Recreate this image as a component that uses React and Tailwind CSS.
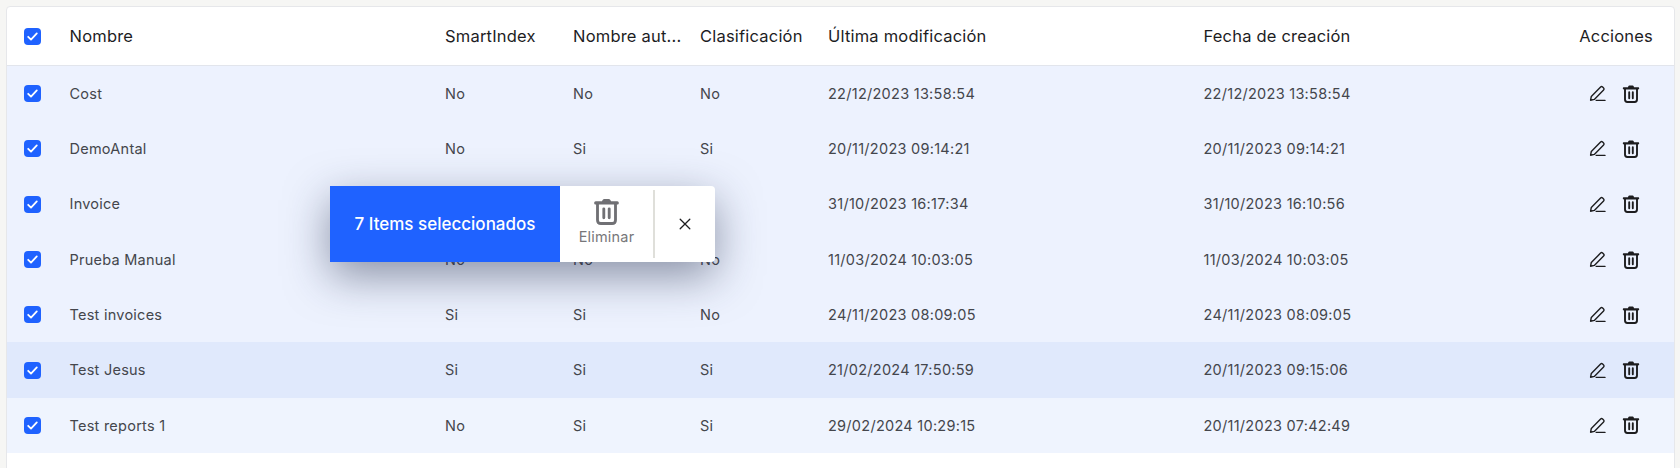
const rows = [
  { name: "Cost", smart: "No", auto: "No", clas: "No", mod: "22/12/2023 13:58:54", created: "22/12/2023 13:58:54" },
  { name: "DemoAntal", smart: "No", auto: "Si", clas: "Si", mod: "20/11/2023 09:14:21", created: "20/11/2023 09:14:21" },
  { name: "Invoice", smart: "No", auto: "No", clas: "Si", mod: "31/10/2023 16:17:34", created: "31/10/2023 16:10:56" },
  { name: "Prueba Manual", smart: "No", auto: "No", clas: "No", mod: "11/03/2024 10:03:05", created: "11/03/2024 10:03:05" },
  { name: "Test invoices", smart: "Si", auto: "Si", clas: "No", mod: "24/11/2023 08:09:05", created: "24/11/2023 08:09:05" },
  { name: "Test Jesus", smart: "Si", auto: "Si", clas: "Si", mod: "21/02/2024 17:50:59", created: "20/11/2023 09:15:06", hover: true },
  { name: "Test reports 1", smart: "No", auto: "Si", clas: "Si", mod: "29/02/2024 10:29:15", created: "20/11/2023 07:42:49" },
];

const gridCols = "grid grid-cols-[62.5px_375.5px_128px_127px_128px_375.5px_240px_1fr] items-center";

const Checkbox = () => (
  <span className="ml-[17px] flex h-[17px] w-[17px] items-center justify-center rounded-[4px] bg-[#1f62ff]">
    <svg width="13" height="13" viewBox="0 0 13 13" fill="none" stroke="#fff" strokeWidth="1.8" strokeLinecap="round" strokeLinejoin="round">
      <path d="M2.2 6.8 5 9.6 10.8 3.4" />
    </svg>
  </span>
);

const PenIcon = () => (
  <svg width="17" height="17" viewBox="0 0 17 17" fill="none" stroke="#1d1d1f" strokeWidth="1.4" strokeLinecap="round" strokeLinejoin="round">
    <path d="M1.6 15.2 2.3 11.4 11.6 2.1C12.2 1.5 13 1.5 13.6 2.1L14.6 3.1C15.2 3.7 15.2 4.5 14.6 5.1L5.3 14.4Z" />
    <path d="M7.2 15.4H16" />
  </svg>
);

const TrashIcon = ({ size = 18, color = "#1d1d1f" }) => (
  <svg width={size} height={size} viewBox="0 0 18 18" fill="none">
    <path d="M6 2.2C6.3 1 7 .6 8 .6h2c1 0 1.7.4 2 1.6h4.2c.6 0 1 .5 1 1.1s-.4 1.1-1 1.1H1.8c-.6 0-1-.5-1-1.1s.4-1.1 1-1.1Z" fill={color} />
    <path d="M3 4v10.6C3 16 3.9 17 5.3 17h7.4c1.4 0 2.3-1 2.3-2.4V4" stroke={color} strokeWidth="1.9" />
    <path d="M7.2 7.2v6M10.8 7.2v6" stroke={color} strokeWidth="1.9" strokeLinecap="round" />
  </svg>
);

export default function App() {
  return (
    <div className="relative h-[468px] w-[1680px] overflow-hidden bg-[#f6f6f4] pl-[6px] pr-[5px] pt-[6px] font-['Inter',sans-serif]">
      <div className="h-[480px] rounded-[4px] border border-[#e6e7ea] bg-white">
        <div className={`${gridCols} h-[59px] border-b border-[#e2e5ec] text-[16.5px] font-normal tracking-[0.2px] text-[#1d1d1f]`}>
          <Checkbox />
          <span>Nombre</span>
          <span>SmartIndex</span>
          <span>Nombre aut...</span>
          <span>Clasificación</span>
          <span>Última modificación</span>
          <span>Fecha de creación</span>
          <span className="pr-[21px] text-right">Acciones</span>
        </div>
        {rows.map((row, i) => (
          <div
            key={row.name}
            className={`${gridCols} h-[55.3px] text-[14.5px] tracking-[0.25px] text-[#44464c] ${row.hover ? "bg-[#e0e9fc]" : i === rows.length - 1 ? "bg-[#eff4fe]" : "bg-[#edf2fe]"}`}
          >
            <Checkbox />
            <span>{row.name}</span>
            <span>{row.smart}</span>
            <span>{row.auto}</span>
            <span>{row.clas}</span>
            <span className="tracking-[0.27px]">{row.mod}</span>
            <span className="tracking-[0.27px]">{row.created}</span>
            <span className="flex items-center justify-end gap-[16px] pr-[34px]">
              <PenIcon />
              <TrashIcon />
            </span>
          </div>
        ))}
      </div>

      <div className="absolute left-[330px] top-[186px] flex h-[76px] w-[385px] overflow-hidden rounded-r-[4px] bg-white shadow-[0_14px_44px_rgba(40,50,80,0.5)]">
        <div className="flex w-[230px] items-center justify-center bg-[#1f62ff] pt-[2px] text-[17px] font-medium text-white">
          7 Items seleccionados
        </div>
        <div className="flex w-[93px] flex-col items-center pt-[12px] text-[14.5px] leading-[17px] tracking-[0.2px] text-[#77777a]">
          <TrashIcon size={27} color="#707074" />
          <span className="mt-[3px]">Eliminar</span>
        </div>
        <div className="my-[4px] w-[2px] bg-[#dfdfda]" />
        <div className="flex flex-1 items-center justify-center">
          <svg width="12" height="12" viewBox="0 0 12 12" stroke="#1d1d1f" strokeWidth="1.3" strokeLinecap="round">
            <path d="M1.2 1.2l9.6 9.6M10.8 1.2l-9.6 9.6" />
          </svg>
        </div>
      </div>
    </div>
  );
}
